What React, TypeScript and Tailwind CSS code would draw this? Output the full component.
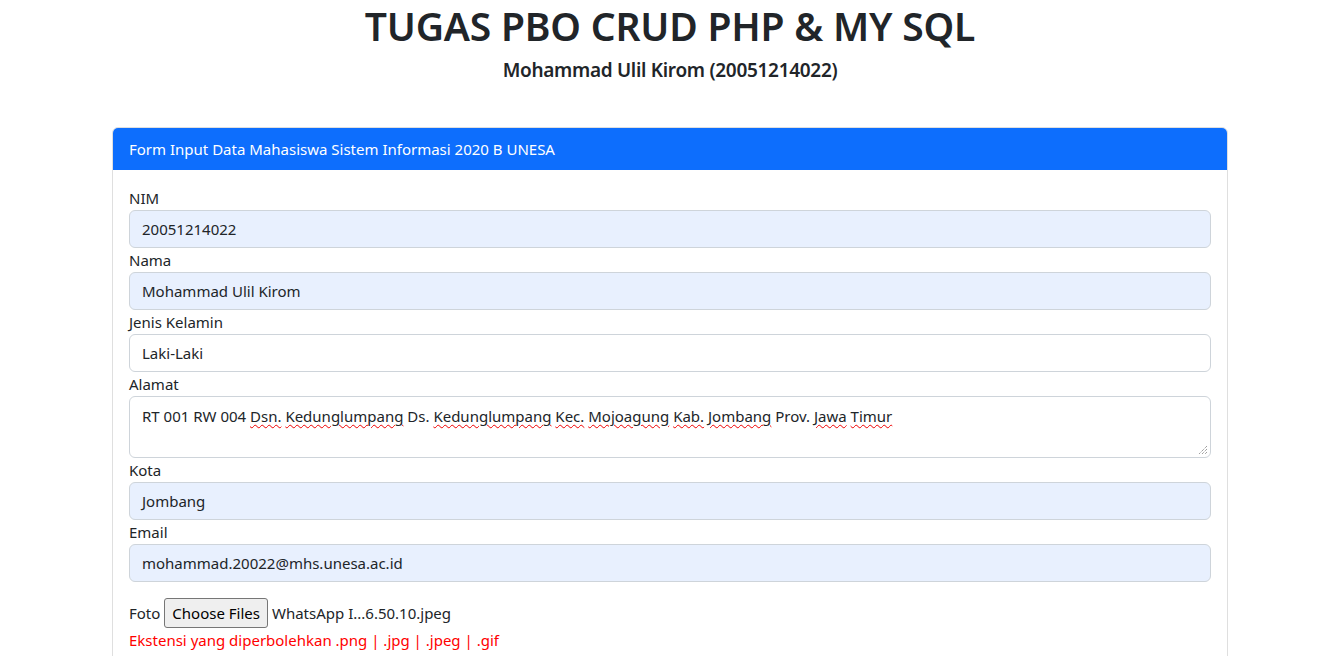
import React from "react";

const font = { fontFamily: '"Noto Sans", "Open Sans", sans-serif' };

function Field({ label, value, filled = true }: { label: string; value: string; filled?: boolean }) {
  return (
    <div>
      <div className="h-[24px] leading-[24px] text-[15px] text-[#212529]">{label}</div>
      <div
        className={`h-[38px] rounded-[6px] border border-[#ced4da] px-[12px] flex items-center text-[15px] text-[#212529] ${
          filled ? "bg-[#e8f0fe]" : "bg-white"
        }`}
      >
        {value}
      </div>
    </div>
  );
}

const W = ({ children }: { children: React.ReactNode }) => (
  <span className="underline decoration-wavy decoration-[#e00] decoration-1 underline-offset-[2px]">{children}</span>
);

export default function App() {
  return (
    <div className="bg-white min-h-[656px] h-[656px] overflow-hidden text-[#212529]" style={font}>
      <div className="pt-[2px] text-center">
        <h1 className="text-[39px] leading-[48px] font-semibold ml-[8px] tracking-[-0.2px]">TUGAS PBO CRUD PHP &amp; MY SQL</h1>
        <h5 className="mt-[8px] text-[19px] leading-[24px] font-semibold ml-[8px] tracking-[-0.3px]">Mohammad Ulil Kirom (20051214022)</h5>
      </div>
      <div className="ml-[112px] w-[1116px] mt-[45px] border border-[#dfdfdf] rounded-[6px] overflow-hidden">
        <div className="bg-[#0d6efd] text-white h-[42px] px-[16px] flex items-center text-[15px]">
          Form Input Data Mahasiswa Sistem Informasi 2020 B UNESA
        </div>
        <div className="px-[16px] pt-[16px] pb-[40px]">
          <Field label="NIM" value="20051214022" />
          <Field label="Nama" value="Mohammad Ulil Kirom" />
          <Field label="Jenis Kelamin" value="Laki-Laki" filled={false} />
          <div>
            <div className="h-[24px] leading-[24px] text-[15px]">Alamat</div>
            <div className="relative h-[62px] rounded-[6px] border border-[#ced4da] px-[12px] pt-[7px] text-[15px] leading-[24px] bg-white">
              RT 001 RW 004 <W>Dsn.</W> <W>Kedunglumpang</W> Ds. <W>Kedunglumpang</W> <W>Kec.</W> <W>Mojoagung</W>{" "}
              <W>Kab.</W> <W>Jombang</W> Prov. <W>Jawa</W> <W>Timur</W>
              <svg className="absolute right-[2px] bottom-[2px]" width="10" height="10" viewBox="0 0 10 10">
                <path d="M9 1 L1 9 M9 4 L4 9 M9 7 L7 9" stroke="#777" strokeWidth="1" strokeDasharray="1 1" />
              </svg>
            </div>
          </div>
          <Field label="Kota" value="Jombang" />
          <Field label="Email" value="mohammad.20022@mhs.unesa.ac.id" />
          <div className="mt-[16px] flex items-center h-[30px] text-[15px]">
            <span>Foto</span>
            <span className="ml-[4px] h-[30px] px-[7px] flex items-center border border-[#767676] rounded-[3px] bg-[#efefef] text-[15px] text-black">
              Choose Files
            </span>
            <span className="ml-[4px]">WhatsApp I...6.50.10.jpeg</span>
          </div>
          <div className="mt-[0px] text-[15px] leading-[24px] text-[#ff0000]">Ekstensi yang diperbolehkan .png | .jpg | .jpeg | .gif</div>
        </div>
      </div>
    </div>
  );
}
